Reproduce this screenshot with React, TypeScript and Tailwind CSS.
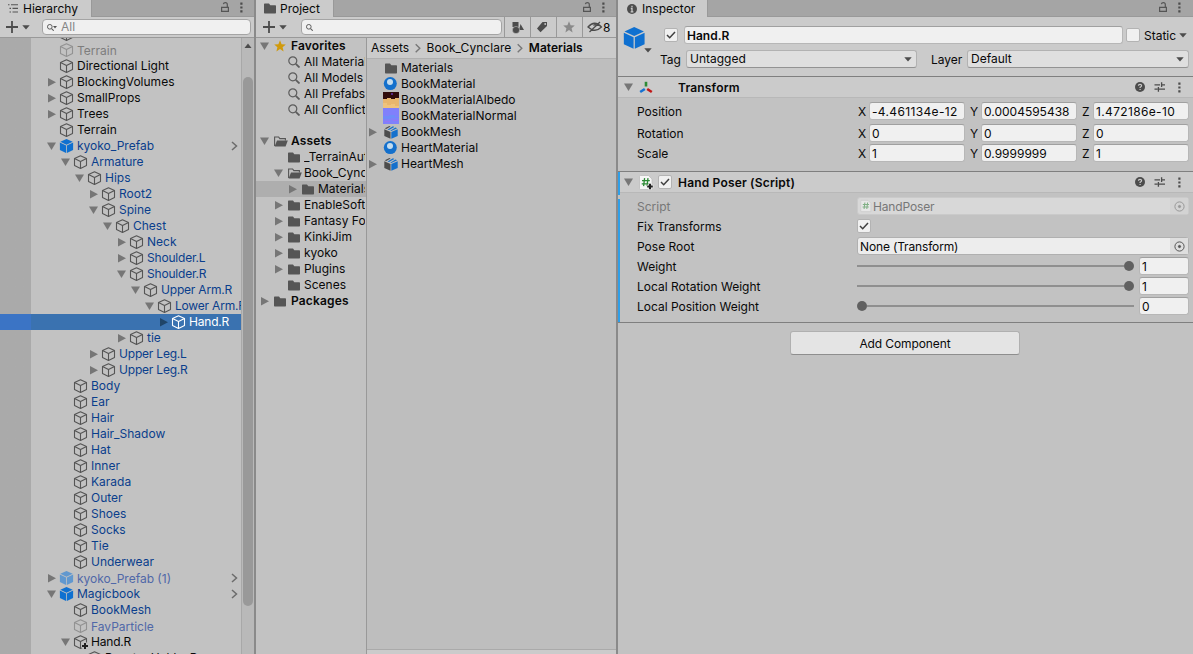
import type { ReactNode } from "react";
import clsx from "clsx";

type Tone = "normal" | "prefab" | "off" | "prefabOff";
type Arrow = "open" | "closed" | null;

interface Node {
  name: string;
  level: number;
  arrow?: Arrow;
  tone?: Tone;
  icon?: "cube" | "prefab" | "added";
  selected?: boolean;
  enter?: boolean;
}

const HIERARCHY: Node[] = [
  { name: "", level: 0 },
  { name: "Terrain", level: 0, tone: "off" },
  { name: "Directional Light", level: 0 },
  { name: "BlockingVolumes", level: 0, arrow: "closed" },
  { name: "SmallProps", level: 0, arrow: "closed" },
  { name: "Trees", level: 0, arrow: "closed" },
  { name: "Terrain", level: 0 },
  { name: "kyoko_Prefab", level: 0, arrow: "open", tone: "prefab", icon: "prefab", enter: true },
  { name: "Armature", level: 1, arrow: "open", tone: "prefab" },
  { name: "Hips", level: 2, arrow: "open", tone: "prefab" },
  { name: "Root2", level: 3, arrow: "closed", tone: "prefab" },
  { name: "Spine", level: 3, arrow: "open", tone: "prefab" },
  { name: "Chest", level: 4, arrow: "open", tone: "prefab" },
  { name: "Neck", level: 5, arrow: "closed", tone: "prefab" },
  { name: "Shoulder.L", level: 5, arrow: "closed", tone: "prefab" },
  { name: "Shoulder.R", level: 5, arrow: "open", tone: "prefab" },
  { name: "Upper Arm.R", level: 6, arrow: "open", tone: "prefab" },
  { name: "Lower Arm.R", level: 7, arrow: "open", tone: "prefab" },
  { name: "Hand.R", level: 8, arrow: "closed", tone: "prefab", selected: true },
  { name: "tie", level: 5, arrow: "closed", tone: "prefab" },
  { name: "Upper Leg.L", level: 3, arrow: "closed", tone: "prefab" },
  { name: "Upper Leg.R", level: 3, arrow: "closed", tone: "prefab" },
  { name: "Body", level: 1, tone: "prefab" },
  { name: "Ear", level: 1, tone: "prefab" },
  { name: "Hair", level: 1, tone: "prefab" },
  { name: "Hair_Shadow", level: 1, tone: "prefab" },
  { name: "Hat", level: 1, tone: "prefab" },
  { name: "Inner", level: 1, tone: "prefab" },
  { name: "Karada", level: 1, tone: "prefab" },
  { name: "Outer", level: 1, tone: "prefab" },
  { name: "Shoes", level: 1, tone: "prefab" },
  { name: "Socks", level: 1, tone: "prefab" },
  { name: "Tie", level: 1, tone: "prefab" },
  { name: "Underwear", level: 1, tone: "prefab" },
  { name: "kyoko_Prefab (1)", level: 0, arrow: "closed", tone: "prefabOff", icon: "prefab", enter: true },
  { name: "Magicbook", level: 0, arrow: "open", tone: "prefab", icon: "prefab", enter: true },
  { name: "BookMesh", level: 1, tone: "prefab" },
  { name: "FavParticle", level: 1, tone: "prefabOff" },
  { name: "Hand.R", level: 1, arrow: "open", icon: "added" },
  { name: "Booster Holder.R", level: 2 },
];

const TONES: Record<Tone, string> = {
  normal: "text-[#090909]",
  prefab: "text-[#0a3e8c]",
  off: "text-[#7d7d7d]",
  prefabOff: "text-[#5068a8]",
};

interface Folder {
  name: string;
  level: number;
  arrow?: Arrow;
  icon: "folder" | "open" | "search" | "star";
  bold?: boolean;
  selected?: boolean;
}

const FAVORITES: Folder[] = [
  { name: "Favorites", level: 0, arrow: "open", icon: "star", bold: true },
  { name: "All Materials", level: 1, icon: "search" },
  { name: "All Models", level: 1, icon: "search" },
  { name: "All Prefabs", level: 1, icon: "search" },
  { name: "All Conflicted", level: 1, icon: "search" },
];

const FOLDERS: Folder[] = [
  { name: "Assets", level: 0, arrow: "open", icon: "open", bold: true },
  { name: "_TerrainAutoUpgrade", level: 1, icon: "folder" },
  { name: "Book_Cynclare", level: 1, arrow: "open", icon: "open" },
  { name: "Materials", level: 2, arrow: "closed", icon: "folder", selected: true },
  { name: "EnableSoftware", level: 1, arrow: "closed", icon: "folder" },
  { name: "Fantasy Forest", level: 1, arrow: "closed", icon: "folder" },
  { name: "KinkiJim", level: 1, arrow: "closed", icon: "folder" },
  { name: "kyoko", level: 1, arrow: "closed", icon: "folder" },
  { name: "Plugins", level: 1, arrow: "closed", icon: "folder" },
  { name: "Scenes", level: 1, icon: "folder" },
  { name: "Packages", level: 0, arrow: "closed", icon: "folder", bold: true },
];

const ASSETS: { name: string; kind: "folder" | "material" | "albedo" | "normal" | "mesh" }[] = [
  { name: "Materials", kind: "folder" },
  { name: "BookMaterial", kind: "material" },
  { name: "BookMaterialAlbedo", kind: "albedo" },
  { name: "BookMaterialNormal", kind: "normal" },
  { name: "BookMesh", kind: "mesh" },
  { name: "HeartMaterial", kind: "material" },
  { name: "HeartMesh", kind: "mesh" },
];

export default function App() {
  return (
    <div className="flex h-[654px] w-[1193px] overflow-hidden bg-[#8a8a8a] font-[Inter,sans-serif] text-[12px] leading-4 whitespace-nowrap text-[#090909]">
      <HierarchyPanel />
      <ProjectPanel />
      <InspectorPanel />
    </div>
  );
}

/* ── Hierarchy ─────────────────────────────────────────────────────────── */

function HierarchyPanel() {
  return (
    <section className="mr-0.5 flex w-[254px] shrink-0 flex-col bg-[#c2c2c2]">
      <TabBar title="Hierarchy" icon={<ListIcon />} tabClass="w-[92px] pl-2 gap-[5px]" lockClass="pr-[11px]" />
      <div className="flex h-[21px] shrink-0 items-center border-b border-[#999] bg-[#cbcbcb] pr-[3px]">
        <AddButton />
        <SearchBox className="flex-1" caret placeholder="All" />
      </div>
      <div className="flex min-h-0 flex-1">
        <div className="flex w-[241px] flex-col overflow-hidden bg-linear-to-r from-[#aaa] from-[31px] to-[#c2c2c2] to-[31px]">
          <div className="-mt-3">
            {HIERARCHY.map((node, i) => (
              <HierarchyRow key={i} node={node} />
            ))}
          </div>
        </div>
        <div className="flex w-[13px] flex-col items-center border-l border-[#a8a8a8] bg-[#b9b9b9] pt-[5px]">
          <svg width="8" height="5" viewBox="0 0 8 5">
            <path d="M0.5 5L4 0.5L7.5 5Z" fill="#4c4c4c" />
          </svg>
          <div className="mt-[29px] h-[529px] w-[10px] rounded-full bg-[#999]" />
        </div>
      </div>
    </section>
  );
}

function HierarchyRow({ node }: { node: Node }) {
  const { name, level, arrow = null, tone = "normal", icon = "cube", selected, enter } = node;
  const faded = tone === "off" || tone === "prefabOff";
  return (
    <div
      className={clsx("flex h-4 items-center", selected && "bg-linear-to-r from-[#3b74c5] from-[31px] to-[#3a72b0] to-[31px]")}
      style={{ paddingLeft: 46 + level * 14 }}
    >
      <Foldout state={arrow} color={selected ? "#1f4468" : "#767676"} />
      <span className="ml-[3px] w-[14px] shrink-0">
        {icon === "prefab" ? <PrefabCube faded={faded} /> : <Cube color={selected ? "#fff" : faded ? "#929292" : "#555"} added={icon === "added"} />}
      </span>
      <span
        className={clsx(
          "ml-[3px]",
          name.includes(".") && "tracking-[-0.2px]",
          faded && "pt-px",
          selected ? "text-white" : TONES[tone],
        )}
      >
        {name}
      </span>
      {enter && (
        <svg className="mr-[3px] ml-auto" width="7" height="10" viewBox="0 0 7 10" fill="none" stroke="#6c6c6c" strokeWidth="1.5">
          <path d="M1 1L5.5 5L1 9" />
        </svg>
      )}
    </div>
  );
}

/* ── Project ───────────────────────────────────────────────────────────── */

function ProjectPanel() {
  return (
    <section className="mr-0.5 flex w-[360px] shrink-0 flex-col bg-[#bebebe]">
      <TabBar title="Project" icon={<FolderIcon />} tabClass="w-[78px] pl-2 gap-1" lockClass="pr-[11px]" />
      <div className="flex h-[21px] shrink-0 items-center border-b border-[#999] bg-[#cbcbcb]">
        <AddButton className="pl-px" />
        <SearchBox className="mr-0.5 w-[201px]" />
        <ToolButton>
          <svg width="14" height="13" viewBox="0 0 14 13" fill="#4c4c4c">
            <path d="M1.5 1H7.5V6H1.5ZM9.5 3L13 9H8Z" />
            <circle cx="5" cy="9" r="3.6" stroke="#cbcbcb" strokeWidth="0.5" />
          </svg>
        </ToolButton>
        <ToolButton>
          <svg className="mr-[3px]" width="12" height="12" viewBox="0 0 12 12">
            <path d="M6.5 1L11 1L11 5L4.5 11.2L1 7.5Z" fill="#4c4c4c" />
            <circle cx="9.2" cy="3" r="0.9" fill="#cbcbcb" />
          </svg>
        </ToolButton>
        <ToolButton>
          <span className="mr-0.5">
            <Star color="#8a8a8a" />
          </span>
        </ToolButton>
        <div className="flex h-5 flex-1 items-center border-l border-[#999] pl-1">
          <svg width="16" height="12" viewBox="0 0 16 12" fill="none" stroke="#4c4c4c" strokeWidth="1.3">
            <path d="M1 6Q7.5 -1.5 14.5 6Q8 12.5 1 6ZM2.5 11L13 1" />
            <path d="M6.5 4.5Q8.5 2.5 9.5 5" />
          </svg>
          <span className="pt-px">8</span>
        </div>
      </div>
      <div className="flex min-h-0 flex-1">
        <div className="w-[111px] shrink-0 overflow-hidden border-r border-[#999] bg-[#c2c2c2]">
          {FAVORITES.map((f) => (
            <FolderRow key={f.name} folder={f} />
          ))}
          <div className="h-[15px]" />
          {FOLDERS.map((f) => (
            <FolderRow key={f.name} folder={f} />
          ))}
        </div>
        <div className="flex min-w-0 flex-1 flex-col">
          <div className="flex h-[21px] shrink-0 items-center border-b border-[#b0b0b0] bg-[#cbcbcb] pl-1">
            <span>Assets</span>
            <Chevron />
            <span className="tracking-[0.04px]">Book_Cynclare</span>
            <Chevron />
            <span className="font-semibold">Materials</span>
          </div>
          <div className="flex-1 pt-px">
            {ASSETS.map((asset) => (
              <div key={asset.name} className="flex h-4 items-center">
                <span className="w-4 shrink-0">{asset.kind === "mesh" && <Foldout state="closed" color="#767676" />}</span>
                <span className="flex w-[18px] shrink-0 justify-start">
                  <AssetIcon kind={asset.kind} />
                </span>
                <span>{asset.name}</span>
              </div>
            ))}
          </div>
          <div className="h-[5px] shrink-0 border-t border-[#aaa] bg-[#cbcbcb]" />
        </div>
      </div>
    </section>
  );
}

function FolderRow({ folder }: { folder: Folder }) {
  return (
    <div className={clsx("flex h-4 items-center pr-px", folder.selected && "bg-[#aeaeae]")} style={{ paddingLeft: 3 + folder.level * 14 }}>
      <Foldout state={folder.arrow ?? null} color="#767676" />
      <span className="ml-1 flex w-[14px] shrink-0 justify-start">
        {folder.icon === "star" && <Star color="#d09a0c" />}
        {folder.icon === "search" && <SearchGlyph size={12} />}
        {folder.icon === "folder" && <FolderIcon />}
        {folder.icon === "open" && <OpenFolderIcon />}
      </span>
      <span className={clsx("min-w-0 flex-1 overflow-hidden", folder.bold ? "ml-[3px] font-semibold tracking-[0.15px]" : "ml-0.5")}>{folder.name}</span>
    </div>
  );
}

function ToolButton({ children }: { children: ReactNode }) {
  return <div className="grid h-5 w-[26px] place-items-center border-l border-[#999]">{children}</div>;
}

/* ── Inspector ─────────────────────────────────────────────────────────── */

function InspectorPanel() {
  return (
    <section className="flex w-[575px] shrink-0 flex-col bg-[#c2c2c2]">
      <TabBar title="Inspector" icon={<InfoIcon />} tabClass="w-[90px] pl-[9px] gap-[5px]" lockClass="pr-[12px]" />

      <div className="flex h-[60px] shrink-0 border-b border-[#7f7f7f] bg-[#cbcbcb] pt-[9px]">
        <div className="flex w-[34px] shrink-0 pt-px pl-[6px]">
          <div>
            <PrefabCube size={22} />
            <Caret className="-mt-px ml-5" />
          </div>
        </div>
        <div className="flex-1">
          <div className="flex h-[18px] items-center pl-3">
            <Checkbox checked />
            <Field className="ml-[6px] w-[439px] font-semibold">Hand.R</Field>
            <span className="ml-[3px]">
              <Checkbox />
            </span>
            <span className="ml-1 pt-0.5">Static</span>
            <Caret className="ml-[3px]" />
          </div>
          <div className="mt-[6px] flex h-[18px] items-center pl-2">
            <span className="w-[26px] pt-0.5">Tag</span>
            <Dropdown className="w-[231px]">Untagged</Dropdown>
            <span className="ml-[14px] w-9 pt-0.5">Layer</span>
            <Dropdown className="w-[222px]">Default</Dropdown>
          </div>
        </div>
      </div>

      <ComponentHeader title="Transform" icon={<TransformIcon />} />
      <div className="h-[73px] shrink-0 pt-1">
        <VectorRow label="Position" values={["-4.461134e-12", "0.0004595438", "1.472186e-10"]} />
        <div className="h-1" />
        <VectorRow label="Rotation" values={["0", "0", "0"]} />
        <div className="h-0.5" />
        <VectorRow label="Scale" values={["1", "0.9999999", "1"]} />
      </div>

      {/* blue bars mark the component as an unsaved override */}
      <div className="relative border-y border-[#7f7f7f]">
        <div className="absolute top-0 left-0 h-[23px] w-0.5 bg-[#2f9fe8]" />
        <div className="absolute top-[27px] bottom-0 left-0 w-0.5 bg-[#2f9fe8]" />
        <ComponentHeader title="Hand Poser (Script)" icon={<ScriptIcon added />} checkbox />
        <div className="flex flex-col gap-0.5 pt-[4px] pb-[7px]">
          <PropertyRow label="Script" disabled>
            <ObjectField disabled icon={<ScriptIcon small />}>
              HandPoser
            </ObjectField>
          </PropertyRow>
          <PropertyRow label="Fix Transforms">
            <Checkbox checked />
          </PropertyRow>
          <PropertyRow label="Pose Root">
            <ObjectField>None (Transform)</ObjectField>
          </PropertyRow>
          <PropertyRow label="Weight">
            <Slider value={1} />
          </PropertyRow>
          <PropertyRow label="Local Rotation Weight">
            <Slider value={1} />
          </PropertyRow>
          <PropertyRow label="Local Position Weight">
            <Slider value={0} />
          </PropertyRow>
        </div>
      </div>

      <button className="mt-2 ml-[172px] h-6 w-[230px] rounded-[3px] border border-[#b0b0b0] border-b-[#8e8e8e] bg-[#e4e4e4] pt-0.5 tracking-[-0.1px]">
        Add Component
      </button>
    </section>
  );
}

function ComponentHeader({ title, icon, checkbox }: { title: string; icon: ReactNode; checkbox?: boolean }) {
  return (
    <div className="flex h-[21px] shrink-0 items-center border-b border-[#b8b8b8] bg-[#cbcbcb] pr-[12px] pl-[5px]">
      <Foldout state="open" color="#767676" />
      <span className="ml-[5px] w-[19px]">{icon}</span>
      <span className="w-5">{checkbox && <Checkbox checked />}</span>
      <span className="pt-0.5 font-semibold tracking-[0.18px]">{title}</span>
      <span className="ml-auto flex items-center gap-[9px]">
        <svg width="10" height="10" viewBox="0 0 10 10">
          <circle cx="5" cy="5" r="5" fill="#4c4c4c" />
          <path d="M3.4 3.8Q3.4 2.3 5 2.3Q6.6 2.3 6.6 3.7Q6.6 4.5 5.1 5.2V6M5.1 6.9V8.1" fill="none" stroke="#cbcbcb" strokeWidth="1.2" />
        </svg>
        <svg width="12" height="10" viewBox="0 0 12 10" fill="none" stroke="#4c4c4c" strokeWidth="1.3">
          <path d="M0.5 2.8H6M7.6 0.3V5M7.6 2.8H11M0.5 7.2H3.6M4.4 5V9.7M4.4 7.2H11" />
        </svg>
        <span className="ml-[3px]">
          <Dots />
        </span>
      </span>
    </div>
  );
}

function VectorRow({ label, values }: { label: string; values: string[] }) {
  return (
    <div className="flex h-[18px] items-center pl-[19px]">
      <span className="w-[221px] shrink-0 pt-0.5">{label}</span>
      {["X", "Y", "Z"].map((axis, i) => (
        <span key={axis} className="mr-1 flex w-[108px] shrink-0 items-center">
          <span className="w-[11px] shrink-0 pt-0.5">{axis}</span>
          <Field className={clsx("w-24", values[i].includes("e-") && "tracking-[0.35px]")}>{values[i]}</Field>
        </span>
      ))}
    </div>
  );
}

function PropertyRow({ label, disabled, children }: { label: string; disabled?: boolean; children: ReactNode }) {
  return (
    <div className="flex h-[18px] items-center pr-1 pl-[19px]">
      <span className={clsx("w-[220px] shrink-0 pt-0.5", disabled && "text-[#777]")}>{label}</span>
      {children}
    </div>
  );
}

function Field({ className, children }: { className: string; children: ReactNode }) {
  return (
    <div className={clsx("flex h-[18px] shrink-0 items-center rounded-[3px] border border-[#b7b7b7] border-t-[#a0a0a0] bg-[#f0f0f0] pt-0.5 pl-0.5", className)}>
      {children}
    </div>
  );
}

function Dropdown({ className, children }: { className: string; children: ReactNode }) {
  return (
    <div className={clsx("flex h-[18px] shrink-0 items-center rounded-[3px] border border-[#b2b2b2] border-b-[#939393] bg-[#dfdfdf] pr-1 pl-[3px]", className)}>
      <span>{children}</span>
      <Caret className="ml-auto" />
    </div>
  );
}

function ObjectField({ disabled, icon, children }: { disabled?: boolean; icon?: ReactNode; children: ReactNode }) {
  return (
    <div
      className={clsx(
        "flex h-[18px] flex-1 items-center rounded-[3px] border pl-0.5 tracking-[-0.15px]",
        disabled ? "border-[#cacaca] bg-[#d8d8d8] text-[#777]" : "border-[#b0b0b0] bg-[#ededed]",
      )}
    >
      {icon && <span className="mr-px">{icon}</span>}
      <span className="pt-0.5">{children}</span>
      <span className={clsx("ml-auto grid h-4 w-[18px] place-items-center", disabled ? "bg-[#d3d3d3]" : "bg-[#dedede]")}>
        <svg width="11" height="11" viewBox="0 0 11 11" fill="none" stroke={disabled ? "#989898" : "#555"}>
          <circle cx="5.5" cy="5.5" r="4.6" />
          <circle cx="5.5" cy="5.5" r="1.1" fill={disabled ? "#989898" : "#555"} />
        </svg>
      </span>
    </div>
  );
}

function Slider({ value }: { value: number }) {
  return (
    <>
      <div className={clsx("flex w-[277px] items-center", value === 0 && "flex-row-reverse")}>
        <span className="h-0.5 flex-1 bg-[#8f8f8f]" />
        <span className="size-[10px] rounded-full bg-[#616161]" />
      </div>
      <Field className="ml-[5px] w-[50px]">{value}</Field>
    </>
  );
}

function Checkbox({ checked }: { checked?: boolean }) {
  return (
    <span className="grid size-[14px] place-items-center rounded-[2px] border border-[#b3b3b3] bg-[#f0f0f0]">
      {checked && (
        <svg width="10" height="10" viewBox="0 0 10 10" fill="none" stroke="#3f3f3f" strokeWidth="1.5">
          <path d="M1 5L3.7 7.7L9 2" />
        </svg>
      )}
    </span>
  );
}

/* ── Shared chrome ─────────────────────────────────────────────────────── */

function TabBar({ title, icon, tabClass, lockClass }: { title: string; icon: ReactNode; tabClass: string; lockClass: string }) {
  return (
    <header className="flex h-[17px] shrink-0 bg-[#a5a5a5]">
      <div className={clsx("flex h-[17px] items-center border-r border-[#999] bg-[#cbcbcb]", tabClass)}>
        {icon}
        <span className="pt-px">{title}</span>
      </div>
      <div className={clsx("flex flex-1 items-center justify-end gap-[11px] border-b border-[#999] pb-0.5", lockClass)}>
        <svg width="8" height="10" viewBox="0 0 8 10" fill="none" stroke="#555" strokeWidth="1.2">
          <path d="M0.6 5.3H7.4V9.4H0.6ZM6.3 5.2V2.6Q6.3 0.7 4.4 0.7Q2.6 0.7 2.4 2.2" />
        </svg>
        <Dots />
      </div>
    </header>
  );
}

function AddButton({ className }: { className?: string }) {
  return (
    <div className={clsx("w-[42px] shrink-0", className)}>
      <div className="flex items-center pl-[6px]">
        <svg width="12" height="12" viewBox="0 0 12 12" stroke="#4c4c4c" strokeWidth="1.8">
          <path d="M6 0V12M0 6H12" />
        </svg>
        <Caret className="ml-[4px]" />
      </div>
    </div>
  );
}

function SearchBox({ className, caret, placeholder }: { className: string; caret?: boolean; placeholder?: string }) {
  return (
    <div className={clsx("flex h-4 items-center rounded-[4px] border border-[#a4a4a4] bg-[#f0f0f0] pl-1", className, !caret && "ml-[3px]")}>
      <SearchGlyph size={7} />
      {caret && (
        <svg className="-ml-px" width="4" height="3" viewBox="0 0 4 3">
          <path d="M0 0H4L2 2.5Z" fill="#555" />
        </svg>
      )}
      <span className="ml-[4px] text-[#868686]">{placeholder}</span>
    </div>
  );
}

function Foldout({ state, color }: { state: Arrow; color: string }) {
  return (
    <svg className="shrink-0" width="11" height="10" viewBox="0 0 11 10" fill={color}>
      {state === "open" && <path d="M1 1.5H10L5.5 9Z" />}
      {state === "closed" && <path d="M2 1L10 5.2L2 9.4Z" />}
    </svg>
  );
}

function Caret({ className }: { className?: string }) {
  return (
    <svg className={className} width="8" height="5" viewBox="0 0 8 5">
      <path d="M0.3 0.3H7.7L4 4.6Z" fill="#4c4c4c" />
    </svg>
  );
}

function Chevron() {
  return (
    <svg className="mr-[5.5px] ml-1.5" width="6" height="10" viewBox="0 0 6 10" fill="none" stroke="#777" strokeWidth="1.4">
      <path d="M0.7 1.2L4.8 5.2L0.7 9.2" />
    </svg>
  );
}

function Dots() {
  return (
    <svg width="3" height="11" viewBox="0 0 3 11" fill="#4c4c4c">
      <path d="M0.3 0.5H2.5V2.7H0.3ZM0.3 4.4H2.5V6.6H0.3ZM0.3 8.3H2.5V10.5H0.3Z" />
    </svg>
  );
}

/* ── Icons ─────────────────────────────────────────────────────────────── */

function Cube({ color, added }: { color: string; added?: boolean }) {
  return (
    <svg className="overflow-visible" width="14" height="14" viewBox="0.5 0 14 14" fill="none" stroke={color} strokeWidth="1.1" strokeLinejoin="round">
      <path d="M7 0.7L13 3.5V10.5L7 13.4L1 10.5V3.5ZM1 3.5L7 6.6L13 3.5M7 6.6V13.4" />
      {added && (
        <>
          <path d="M11.5 7.5V14.5M8 11H15" stroke="#c2c2c2" strokeWidth="4" />
          <path d="M11.5 8V14M8.5 11H14.5" stroke="#222" strokeWidth="2" />
        </>
      )}
    </svg>
  );
}

function PrefabCube({ faded, size = 14 }: { faded?: boolean; size?: number }) {
  return (
    <svg className="overflow-visible" width={size} height={size} viewBox="0.5 0 14 14" fill={faded ? "#6198cf" : "#0f70d0"}>
      <path d="M7 0L13.2 2.8L7 5.8L0.8 2.8Z" />
      <path d="M0.4 3.6L6.6 6.6V13.9L0.4 11Z" />
      <path d="M13.6 3.6L7.4 6.6V13.9L13.6 11Z" />
    </svg>
  );
}

function FolderIcon() {
  return (
    <svg width="12" height="11" viewBox="0 0 12 11" fill="#555">
      <path d="M0 1.2Q0 0.5 0.7 0.5H5L6.3 2.2H11.3Q12 2.2 12 2.9V9.8Q12 10.5 11.3 10.5H0.7Q0 10.5 0 9.8Z" />
    </svg>
  );
}

function OpenFolderIcon() {
  return (
    <svg width="14" height="11" viewBox="0 0 14 11">
      <path d="M0.6 10V1H4.6L5.8 2.6H11.4V4.4" fill="none" stroke="#555" strokeWidth="1.1" />
      <path d="M3 4.6H13.8L11.6 10.5H0.6Z" fill="#555" />
    </svg>
  );
}

function SearchGlyph({ size }: { size: number }) {
  return (
    <svg width={size} height={size} viewBox="0 0 12 12" fill="none" stroke="#5c5c5c" strokeWidth={size < 10 ? 1.7 : 1.2}>
      <circle cx="4.8" cy="4.8" r="4" />
      <path d="M7.8 7.8L11.5 11.5" strokeWidth="1.8" />
    </svg>
  );
}

function Star({ color }: { color: string }) {
  return (
    <svg width="12" height="12" viewBox="0 0 12 12" fill={color}>
      <path d="M6 0.3L7.6 4.2L11.8 4.5L8.6 7.2L9.6 11.4L6 9.1L2.4 11.4L3.4 7.2L0.2 4.5L4.4 4.2Z" />
    </svg>
  );
}

function ListIcon() {
  return (
    <svg width="10" height="9" viewBox="0 0 10 9" stroke="#555" strokeWidth="1.1">
      <path d="M0 0.8H1.5M3 0.8H10M1.5 4.4H3M4.5 4.4H10M1.5 8H3M4.5 8H10" />
    </svg>
  );
}

function InfoIcon() {
  return (
    <svg width="10" height="10" viewBox="0 0 10 10">
      <circle cx="5" cy="5" r="5" fill="#4c4c4c" />
      <path d="M5 1.7V3.2M3.8 4.5H5V7.7M3.6 7.8H6.4" fill="none" stroke="#cbcbcb" strokeWidth="1.3" />
    </svg>
  );
}

function TransformIcon() {
  return (
    <svg width="14" height="13" viewBox="0 0 14 13" fill="none" strokeWidth="2.6">
      <path d="M7 0.8V5.5" stroke="#2c8a35" />
      <path d="M5.8 8L1.2 11" stroke="#1672d2" />
      <path d="M8.2 8L12.8 11" stroke="#c01818" />
    </svg>
  );
}

function ScriptIcon({ added, small }: { added?: boolean; small?: boolean }) {
  return (
    <svg width={small ? 12 : 14} height={small ? 12 : 15} viewBox="0 0 14 15" className={clsx("overflow-visible", small && "opacity-50")}>
      <path d="M1.5 0.5H9.5L13 4V14.5H1.5Q0.5 14.5 0.5 13.5V1.5Q0.5 0.5 1.5 0.5Z" fill="#f6f6f6" stroke="#b8b8b8" strokeWidth="0.7" />
      <path d="M5.6 3.2L4.6 11.2M9 3.2L8 11.2M3 5.7H10.8M2.7 8.8H10.4" stroke="#2c8a35" strokeWidth="1.3" />
      {added && (
        <>
          <path d="M11 8.2V14.8M7.7 11.5H14.3" stroke="#f0f0f0" strokeWidth="3.4" />
          <path d="M11 8.7V14.3M8.2 11.5H13.8" stroke="#222" strokeWidth="2.1" />
        </>
      )}
    </svg>
  );
}

function AssetIcon({ kind }: { kind: (typeof ASSETS)[number]["kind"] }) {
  if (kind === "folder")
    return (
      <span className="ml-0.5">
        <FolderIcon />
      </span>
    );
  if (kind === "albedo")
    return (
      <svg width="16" height="16" viewBox="0 0 16 16">
        <path d="M0 0H16V16H0Z" fill="#e8b66e" />
        <path d="M0 0H16V6H12V7H8V6H4V7H0Z" fill="#300b0b" />
        <path d="M8 1H10V3H8Z" fill="#5b2a85" />
        <path d="M0 11H4V13H8V12H12V14H16V16H0Z" fill="#efc37c" />
      </svg>
    );
  if (kind === "normal")
    return (
      <svg width="16" height="16" viewBox="0 0 16 16">
        <path d="M0 0H16V16H0Z" fill="#8080fb" />
        <path d="M0 8H6V7H12V9H16V10H8V11H0Z" fill="#6f8cf9" />
        <path d="M2 13H7V14H2ZM10 12H15V13H10Z" fill="#9575f5" />
      </svg>
    );
  if (kind === "material")
    return (
      <svg width="14" height="14" viewBox="0 0 14 14">
        <circle cx="7.3" cy="6.6" r="6.5" fill="#1470cc" />
        <circle cx="7" cy="5" r="3" fill="#c4dcee" />
      </svg>
    );
  return (
    <svg className="ml-px" width="14" height="14" viewBox="0 0 14 14">
      <path d="M0.3 4.2L6.5 7V13.8L0.3 11Z" fill="#4c4c4c" />
      <path d="M7.3 7L13.7 4.2V11L7.3 13.8Z" fill="#1470cc" />
      <path d="M0.8 3.2L5.4 0.9L6.6 1.5L2.3 3.9Z" fill="#4c4c4c" />
      <path d="M3.5 4.5L9 1.3L10.3 1.9L5 5.1ZM6.2 5.7L11.4 2.4L13.2 3.3L7.2 6.1Z" fill="#1470cc" />
    </svg>
  );
}
